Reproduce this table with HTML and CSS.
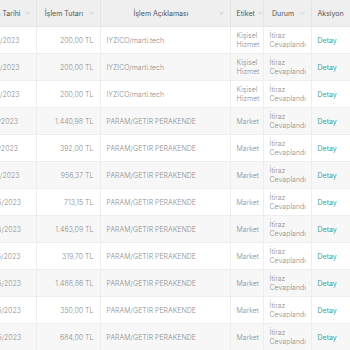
FILE: index.html
```html
<!DOCTYPE html>
<html lang="tr">
<head>
<meta charset="utf-8">
<link rel="stylesheet" href="styles.css">
</head>
<body>
<div class="scroller">
<table class="grid">
<colgroup>
<col class="c-date"><col class="c-amt"><col class="c-desc"><col class="c-tag"><col class="c-stat"><col class="c-act">
</colgroup>
<thead>
<tr>
<th><div class="th"><span class="tt">İşlem Tarihi</span><svg class="chev" viewBox="0 0 6 4"><path d="M0.5 0.8 L3 3.2 L5.5 0.8"/></svg></div></th>
<th><div class="th"><span class="tt">İşlem Tutarı</span><svg class="chev" viewBox="0 0 6 4"><path d="M0.5 0.8 L3 3.2 L5.5 0.8"/></svg></div></th>
<th><div class="th"><span class="tt">İşlem Açıklaması</span><svg class="chev" viewBox="0 0 6 4"><path d="M0.5 0.8 L3 3.2 L5.5 0.8"/></svg></div></th>
<th><div class="th th-left"><span class="tt">Etiket</span><svg class="chev" viewBox="0 0 6 4"><path d="M0.5 0.8 L3 3.2 L5.5 0.8"/></svg></div></th>
<th><div class="th"><span class="tt">Durum</span><svg class="chev" viewBox="0 0 6 4"><path d="M0.5 0.8 L3 3.2 L5.5 0.8"/></svg></div></th>
<th><div class="th th-left"><span class="tt">Aksiyon</span></div></th>
</tr>
</thead>
<tbody>
<tr><td>12/05/2023</td><td class="amt">200,00 TL</td><td>IYZICO/marti.tech</td><td class="two">Kişisel<br>Hizmet</td><td class="two">İtiraz<br>Cevaplandı</td><td><a class="act">Detay</a></td></tr>
<tr><td>12/05/2023</td><td class="amt">200,00 TL</td><td>IYZICO/marti.tech</td><td class="two">Kişisel<br>Hizmet</td><td class="two">İtiraz<br>Cevaplandı</td><td><a class="act">Detay</a></td></tr>
<tr><td>12/05/2023</td><td class="amt">200,00 TL</td><td>IYZICO/marti.tech</td><td class="two">Kişisel<br>Hizmet</td><td class="two">İtiraz<br>Cevaplandı</td><td><a class="act">Detay</a></td></tr>
<tr><td>11/05/2023</td><td class="amt">1.440,98 TL</td><td>PARAM/GETIR PERAKENDE</td><td>Market</td><td class="two">İtiraz<br>Cevaplandı</td><td><a class="act">Detay</a></td></tr>
<tr><td>11/05/2023</td><td class="amt">392,00 TL</td><td>PARAM/GETIR PERAKENDE</td><td>Market</td><td class="two">İtiraz<br>Cevaplandı</td><td><a class="act">Detay</a></td></tr>
<tr><td>10/05/2023</td><td class="amt">956,37 TL</td><td>PARAM/GETIR PERAKENDE</td><td>Market</td><td class="two">İtiraz<br>Cevaplandı</td><td><a class="act">Detay</a></td></tr>
<tr><td>09/05/2023</td><td class="amt">713,15 TL</td><td>PARAM/GETIR PERAKENDE</td><td>Market</td><td class="two">İtiraz<br>Cevaplandı</td><td><a class="act">Detay</a></td></tr>
<tr><td>08/05/2023</td><td class="amt">1.463,09 TL</td><td>PARAM/GETIR PERAKENDE</td><td>Market</td><td class="two">İtiraz<br>Cevaplandı</td><td><a class="act">Detay</a></td></tr>
<tr><td>07/05/2023</td><td class="amt">319,70 TL</td><td>PARAM/GETIR PERAKENDE</td><td>Market</td><td class="two">İtiraz<br>Cevaplandı</td><td><a class="act">Detay</a></td></tr>
<tr><td>06/05/2023</td><td class="amt">1.488,86 TL</td><td>PARAM/GETIR PERAKENDE</td><td>Market</td><td class="two">İtiraz<br>Cevaplandı</td><td><a class="act">Detay</a></td></tr>
<tr><td>05/05/2023</td><td class="amt">350,00 TL</td><td>PARAM/GETIR PERAKENDE</td><td>Market</td><td class="two">İtiraz<br>Cevaplandı</td><td><a class="act">Detay</a></td></tr>
<tr><td>04/05/2023</td><td class="amt">684,00 TL</td><td>PARAM/GETIR PERAKENDE</td><td>Market</td><td class="two">İtiraz<br>Cevaplandı</td><td><a class="act">Detay</a></td></tr>
</tbody>
</table>
</div>
</body>
</html>
```
FILE: styles.css
```css
html, body {
  margin: 0;
  padding: 0;
  background: #ffffff;
}
body {
  font-family: "Inter", "Liberation Sans", sans-serif;
  font-size: 7px;
  font-weight: 300;
  color: #8e8e8e;
  width: 350px;
  height: 350px;
  overflow: hidden;
}
.scroller {
  width: 350px;
  height: 350px;
  overflow: hidden;
}
.grid {
  margin-left: -24px;
  border-collapse: collapse;
  table-layout: fixed;
  width: 434px;
}
.c-date { width: 60px; }
.c-amt { width: 64px; }
.c-desc { width: 130px; }
.c-tag { width: 33px; }
.c-stat { width: 48px; }
.c-act { width: 99px; }
thead th {
  background: #efefef;
  height: 26px;
  padding: 0 6px;
  font-weight: 400;
  color: #555555;
  border-right: 1px solid #e4e4e4;
  border-bottom: 1px solid #e6e6e6;
}
.th {
  display: flex;
  align-items: center;
  gap: 3px;
}
.tt {
  flex: 1;
  text-align: center;
  white-space: nowrap;
}
.th-left .tt {
  flex: 0 0 auto;
  text-align: left;
}
.chev {
  width: 5px;
  height: 4px;
  flex: 0 0 auto;
}
.chev path {
  fill: none;
  stroke: #b0b0b0;
  stroke-width: 0.7;
}
tbody td {
  height: 26px;
  padding: 0 6px;
  border-right: 1px solid #eeeeee;
  border-bottom: 1px solid #eeeeee;
  white-space: nowrap;
  vertical-align: middle;
  line-height: 9px;
}
tbody tr:nth-child(even) td {
  background: #f7f7f7;
}
td.amt {
  text-align: right;
}
td.two {
  white-space: normal;
}
.act {
  color: #3a9f9a;
  font-weight: 400;
}
```
